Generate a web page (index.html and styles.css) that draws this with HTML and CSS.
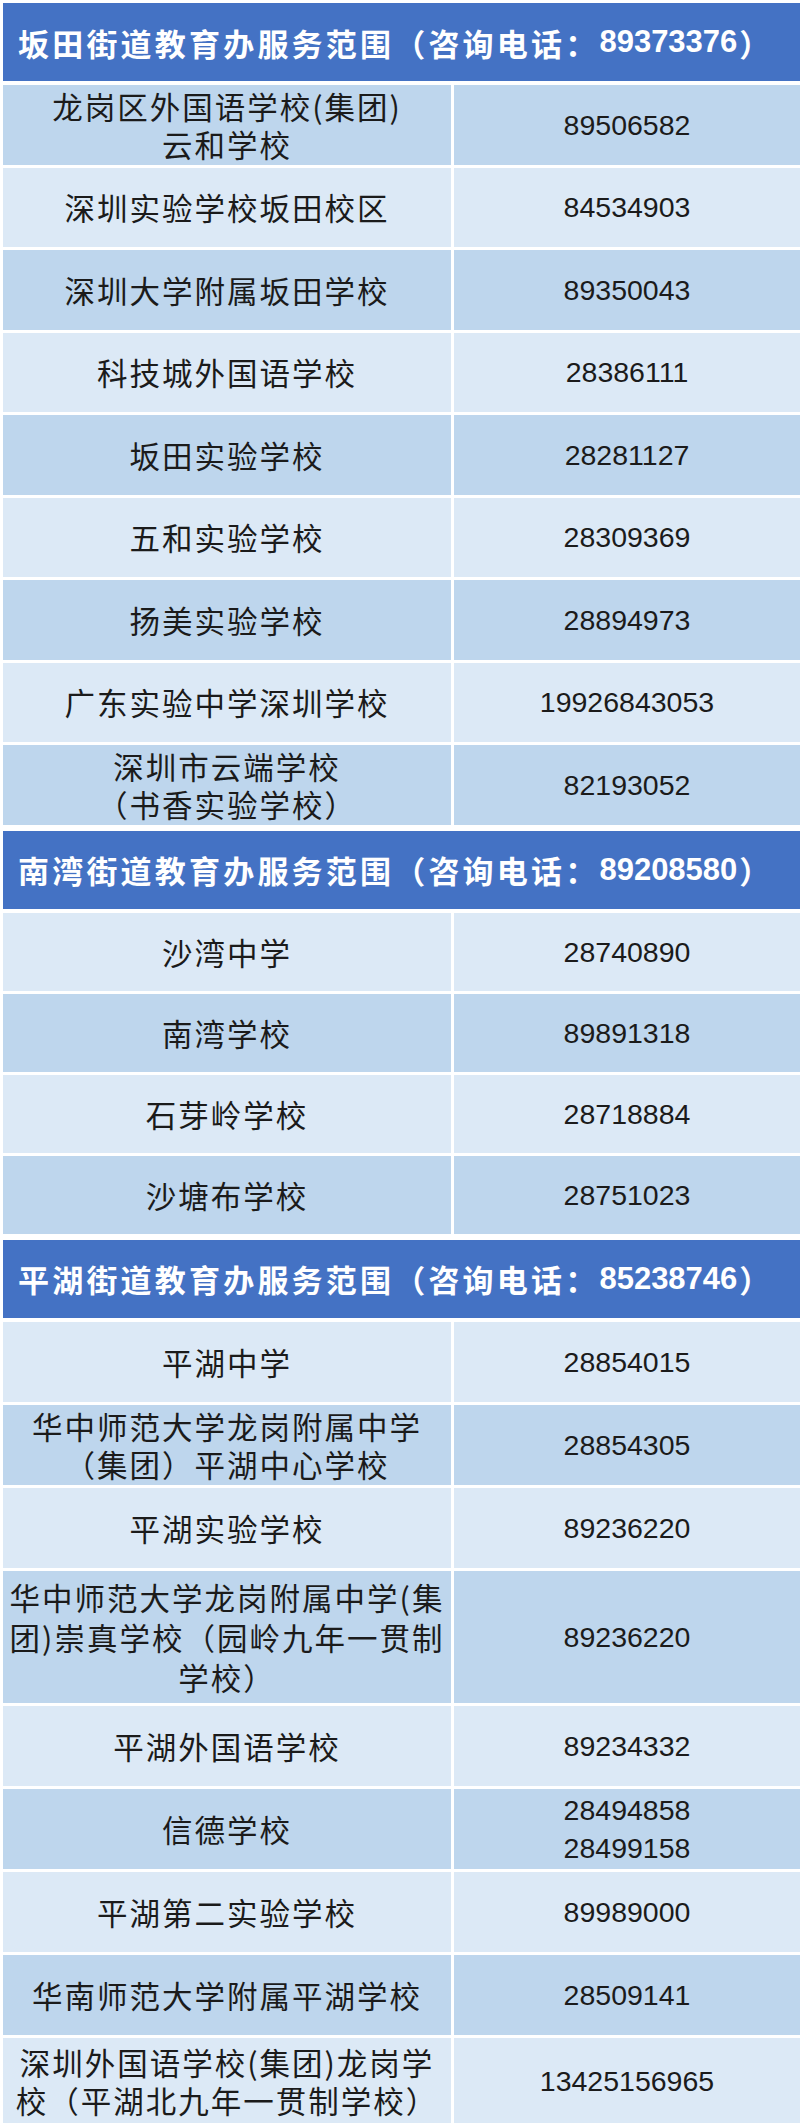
FILE: index.html
```html
<!DOCTYPE html>
<html lang="zh-CN">
<head>
<meta charset="utf-8">
<title>街道教育办服务范围</title>
<link rel="stylesheet" href="styles.css">
</head>
<body>
<div class="page">
  <section class="sec sec-a">
    <div class="head">坂田街道教育办服务范围（咨询电话：<span class="hnum">89373376</span>）</div>
    <div class="row dark"><div class="name">龙岗区外国语学校(集团)<br>云和学校</div><div class="tel">89506582</div></div>
    <div class="row light"><div class="name">深圳实验学校坂田校区</div><div class="tel">84534903</div></div>
    <div class="row dark"><div class="name">深圳大学附属坂田学校</div><div class="tel">89350043</div></div>
    <div class="row light"><div class="name">科技城外国语学校</div><div class="tel">28386111</div></div>
    <div class="row dark"><div class="name">坂田实验学校</div><div class="tel">28281127</div></div>
    <div class="row light"><div class="name">五和实验学校</div><div class="tel">28309369</div></div>
    <div class="row dark"><div class="name">扬美实验学校</div><div class="tel">28894973</div></div>
    <div class="row light"><div class="name">广东实验中学深圳学校</div><div class="tel">19926843053</div></div>
    <div class="row dark"><div class="name">深圳市云端学校<br>（书香实验学校）</div><div class="tel">82193052</div></div>
  </section>
  <section class="sec sec-b">
    <div class="head">南湾街道教育办服务范围（咨询电话：<span class="hnum">89208580</span>）</div>
    <div class="row light"><div class="name">沙湾中学</div><div class="tel">28740890</div></div>
    <div class="row dark"><div class="name">南湾学校</div><div class="tel">89891318</div></div>
    <div class="row light"><div class="name">石芽岭学校</div><div class="tel">28718884</div></div>
    <div class="row dark"><div class="name">沙塘布学校</div><div class="tel">28751023</div></div>
  </section>
  <section class="sec sec-c">
    <div class="head">平湖街道教育办服务范围（咨询电话：<span class="hnum">85238746</span>）</div>
    <div class="row light"><div class="name">平湖中学</div><div class="tel">28854015</div></div>
    <div class="row dark"><div class="name">华中师范大学龙岗附属中学<br>（集团）平湖中心学校</div><div class="tel">28854305</div></div>
    <div class="row light"><div class="name">平湖实验学校</div><div class="tel">89236220</div></div>
    <div class="row dark tall"><div class="name lh40">华中师范大学龙岗附属中学(集<br>团)崇真学校（园岭九年一贯制<br>学校）</div><div class="tel">89236220</div></div>
    <div class="row light"><div class="name">平湖外国语学校</div><div class="tel">89234332</div></div>
    <div class="row dark"><div class="name">信德学校</div><div class="tel">28494858<br>28499158</div></div>
    <div class="row light"><div class="name">平湖第二实验学校</div><div class="tel">89989000</div></div>
    <div class="row dark"><div class="name">华南师范大学附属平湖学校</div><div class="tel">28509141</div></div>
    <div class="row light last"><div class="name">深圳外国语学校(集团)龙岗学<br>校（平湖北九年一贯制学校）</div><div class="tel">13425156965</div></div>
  </section>
</div>
</body>
</html>
```

FILE: styles.css
```css
html, body {
  margin: 0;
  padding: 0;
  background: #ffffff;
}

body {
  width: 800px;
  height: 2123px;
  overflow: hidden;
  font-family: "Noto Sans CJK SC", "Noto Sans", sans-serif;
  color: #1b1b1b;
}

.page {
  padding: 3px 0 0 3px;
  display: flex;
  flex-direction: column;
}

.sec {
  display: flex;
  flex-direction: column;
  gap: 3px;
}

.sec + .sec {
  margin-top: 6px;
}

.head {
  height: 78px;
  margin-bottom: 1px;
  background: #4472c4;
  color: #ffffff;
  font-weight: 700;
  font-size: 31px;
  letter-spacing: 3.2px;
  display: flex;
  align-items: center;
  padding-left: 15px;
  white-space: nowrap;
}

.hnum {
  font-family: "Liberation Sans", Arial, sans-serif;
  font-weight: 700;
  font-size: 31px;
  letter-spacing: 0;
  margin-right: 2px;
}

.row {
  display: grid;
  grid-template-columns: 448px 1fr;
  column-gap: 3px;
  height: 79.5px;
}

.sec-b .row {
  height: 78px;
}

.sec-c .row {
  height: 80px;
}

.sec-c .row.tall {
  height: 132px;
}

.sec-c .row.last {
  height: 86px;
}

.row.dark > div {
  background: #bed6ed;
}

.row.light > div {
  background: #dce9f6;
}

.name,
.tel {
  display: flex;
  align-items: center;
  justify-content: center;
  text-align: center;
  white-space: nowrap;
}

.name {
  font-size: 30.5px;
  letter-spacing: 2px;
  line-height: 38px;
}

.name.lh40 {
  line-height: 40px;
}

.tel {
  font-family: "Liberation Sans", Arial, sans-serif;
  font-size: 28.5px;
  line-height: 38px;
}
```
